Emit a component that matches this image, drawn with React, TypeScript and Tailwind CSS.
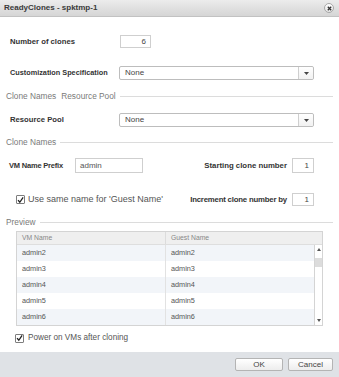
import React from 'react';

const Section: React.FC<{ label: React.ReactNode; mt: string }> = ({ label, mt }) => (
  <div className={`flex items-center h-[10px] pl-[6px] pr-[6px] ${mt}`}>
    <span className="text-[8.3px] text-[#7a7a7a] whitespace-nowrap leading-none">{label}</span>
    <div className="flex-1 h-px bg-[#dcdcdc] ml-[4px]" />
  </div>
);

const Select: React.FC<{ value: string }> = ({ value }) => (
  <div className="w-[195px] h-full flex border border-[#bdbdbd] rounded-[2px] bg-white">
    <div className="flex-1 flex items-center pl-[5px] text-[8px] text-[#444]">{value}</div>
    <div className="w-[15px] border-l border-[#cfcfcf] flex items-center justify-center bg-gradient-to-b from-white to-[#f1f1f1] rounded-r-[2px]">
      <svg width="5" height="3" viewBox="0 0 5 3">
        <path d="M0 0 L5 0 L2.5 3 Z" fill="#444" />
      </svg>
    </div>
  </div>
);

const NumBox: React.FC<{ value: string; w?: string }> = ({ value, w = 'w-[22px]' }) => (
  <div className={`${w} h-full border border-[#cfcfcf] bg-white flex items-center justify-end pr-[4px] text-[8px] text-[#444]`}>
    {value}
  </div>
);

const Check: React.FC = () => (
  <div className="w-[9px] h-[9px] border border-[#7d7d7d] bg-white flex items-center justify-center rounded-[1px]">
    <svg width="8" height="8" viewBox="0 0 8 8">
      <path d="M1.2 4.2 L3.2 6.6 L7 1" stroke="#222" strokeWidth="1.5" fill="none" />
    </svg>
  </div>
);

const rows = ['admin2', 'admin3', 'admin4', 'admin5', 'admin6'];

export default function App() {
  return (
    <div className="w-[339px] h-[377px] flex flex-col bg-white overflow-hidden font-['Liberation_Sans',Arial,sans-serif]">
      {/* title bar */}
      <div className="h-[17px] flex items-center justify-between pl-[4px] pr-[5px] bg-gradient-to-b from-[#ececec] to-[#d5d5d5] border-b border-[#c2c2c2]">
        <span className="text-[8px] font-bold text-[#3a3a3a] leading-none">ReadyClones - spktmp-1</span>
        <div className="w-[10px] h-[10px] rounded-full border border-[#a8a8a8] bg-gradient-to-b from-white to-[#e4e4e4] flex items-center justify-center">
          <svg width="5" height="5" viewBox="0 0 5 5">
            <path d="M0.8 0.8 L4.2 4.2 M4.2 0.8 L0.8 4.2" stroke="#333" strokeWidth="1.3" />
          </svg>
        </div>
      </div>

      {/* number of clones */}
      <div className="flex items-center h-[13px] mt-[18px] pl-[10px]">
        <span className="w-[110px] text-[7.7px] font-bold text-[#333]">Number of clones</span>
        <NumBox value="6" w="w-[31px]" />
      </div>

      {/* customization spec */}
      <div className="flex items-center h-[14px] mt-[18px] pl-[10px]">
        <span className="w-[109px] text-[7.3px] font-bold text-[#333] whitespace-nowrap">Customization Specification</span>
        <Select value="None" />
      </div>

      <Section
        mt="mt-[11px]"
        label={
          <>
            Clone Names<span className="ml-[5px]">Resource Pool</span>
          </>
        }
      />

      {/* resource pool */}
      <div className="flex items-center h-[14px] mt-[12px] pl-[10px]">
        <span className="w-[109px] text-[7.7px] font-bold text-[#333]">Resource Pool</span>
        <Select value="None" />
      </div>

      <Section mt="mt-[10px]" label="Clone Names" />

      {/* prefix / starting number */}
      <div className="flex items-center h-[15px] mt-[11px] pl-[9px] pr-[25px]">
        <span className="w-[66px] text-[7.5px] font-bold text-[#333] tracking-[-0.2px] whitespace-nowrap">VM Name Prefix</span>
        <div className="w-[68px] h-full border border-[#cfcfcf] bg-white flex items-center pl-[4px] text-[8px] text-[#555]">admin</div>
        <div className="flex-1" />
        <span className="text-[7.8px] font-bold text-[#333] mr-[5px] whitespace-nowrap">Starting clone number</span>
        <NumBox value="1" />
      </div>

      {/* same name / increment */}
      <div className="flex items-center h-[13px] mt-[20px] pl-[16px] pr-[25px]">
        <Check />
        <span className="ml-[3px] text-[9px] text-[#555] whitespace-nowrap">Use same name for 'Guest Name'</span>
        <div className="flex-1" />
        <span className="text-[7.8px] font-bold text-[#333] mr-[5px] tracking-[-0.2px] whitespace-nowrap">Increment clone number by</span>
        <NumBox value="1" />
      </div>

      <Section mt="mt-[11px]" label="Preview" />

      {/* preview table */}
      <div className="ml-[16px] mt-[4px] w-[307px] border border-[#d4d4d4] flex flex-col">
        <div className="h-[13px] flex bg-[#efefef] border-b border-[#dedede] text-[6.8px] text-[#888]">
          <div className="w-[149px] flex items-center pl-[5px] border-r border-[#dcdcdc]">VM Name</div>
          <div className="flex-1 flex items-center pl-[5px]">Guest Name</div>
        </div>
        <div className="flex">
          <div className="flex-1 flex flex-col">
            {rows.map((r, i) => (
              <div
                key={r}
                className={`h-[16px] flex text-[7.3px] text-[#555] ${i % 2 === 0 ? 'bg-[#f2f5f9]' : 'bg-white'}`}
              >
                <div className="w-[149px] flex items-center pl-[5px] border-r border-[#e2e2e2]">{r}</div>
                <div className="flex-1 flex items-center pl-[5px]">{r}</div>
              </div>
            ))}
          </div>
          <div className="w-[8px] flex flex-col border-l border-[#d4d4d4] bg-white">
            <div className="h-[9px] flex items-center justify-center">
              <svg width="4" height="3" viewBox="0 0 4 3">
                <path d="M0 3 L4 3 L2 0 Z" fill="#555" />
              </svg>
            </div>
            <div className="h-[9px] mt-[4px] bg-[#dcdcdc]" />
            <div className="flex-1" />
            <div className="h-[9px] flex items-center justify-center">
              <svg width="4" height="3" viewBox="0 0 4 3">
                <path d="M0 0 L4 0 L2 3 Z" fill="#555" />
              </svg>
            </div>
          </div>
        </div>
      </div>

      {/* power on */}
      <div className="flex items-center h-[10px] mt-[7px] pl-[15px]">
        <Check />
        <span className="ml-[4px] text-[8.2px] text-[#555] whitespace-nowrap">Power on VMs after cloning</span>
      </div>

      {/* footer */}
      <div className="mt-auto h-[25px] bg-[#dfe2e6] flex items-center justify-end gap-[5px] pr-[6px]">
        <button className="w-[48px] h-[13px] border border-[#b4b4b4] rounded-[2px] bg-gradient-to-b from-white to-[#ededed] text-[8px] text-[#444] flex items-center justify-center">
          OK
        </button>
        <button className="w-[45px] h-[13px] border border-[#b4b4b4] rounded-[2px] bg-gradient-to-b from-white to-[#ededed] text-[8px] text-[#444] flex items-center justify-center">
          Cancel
        </button>
      </div>
    </div>
  );
}
